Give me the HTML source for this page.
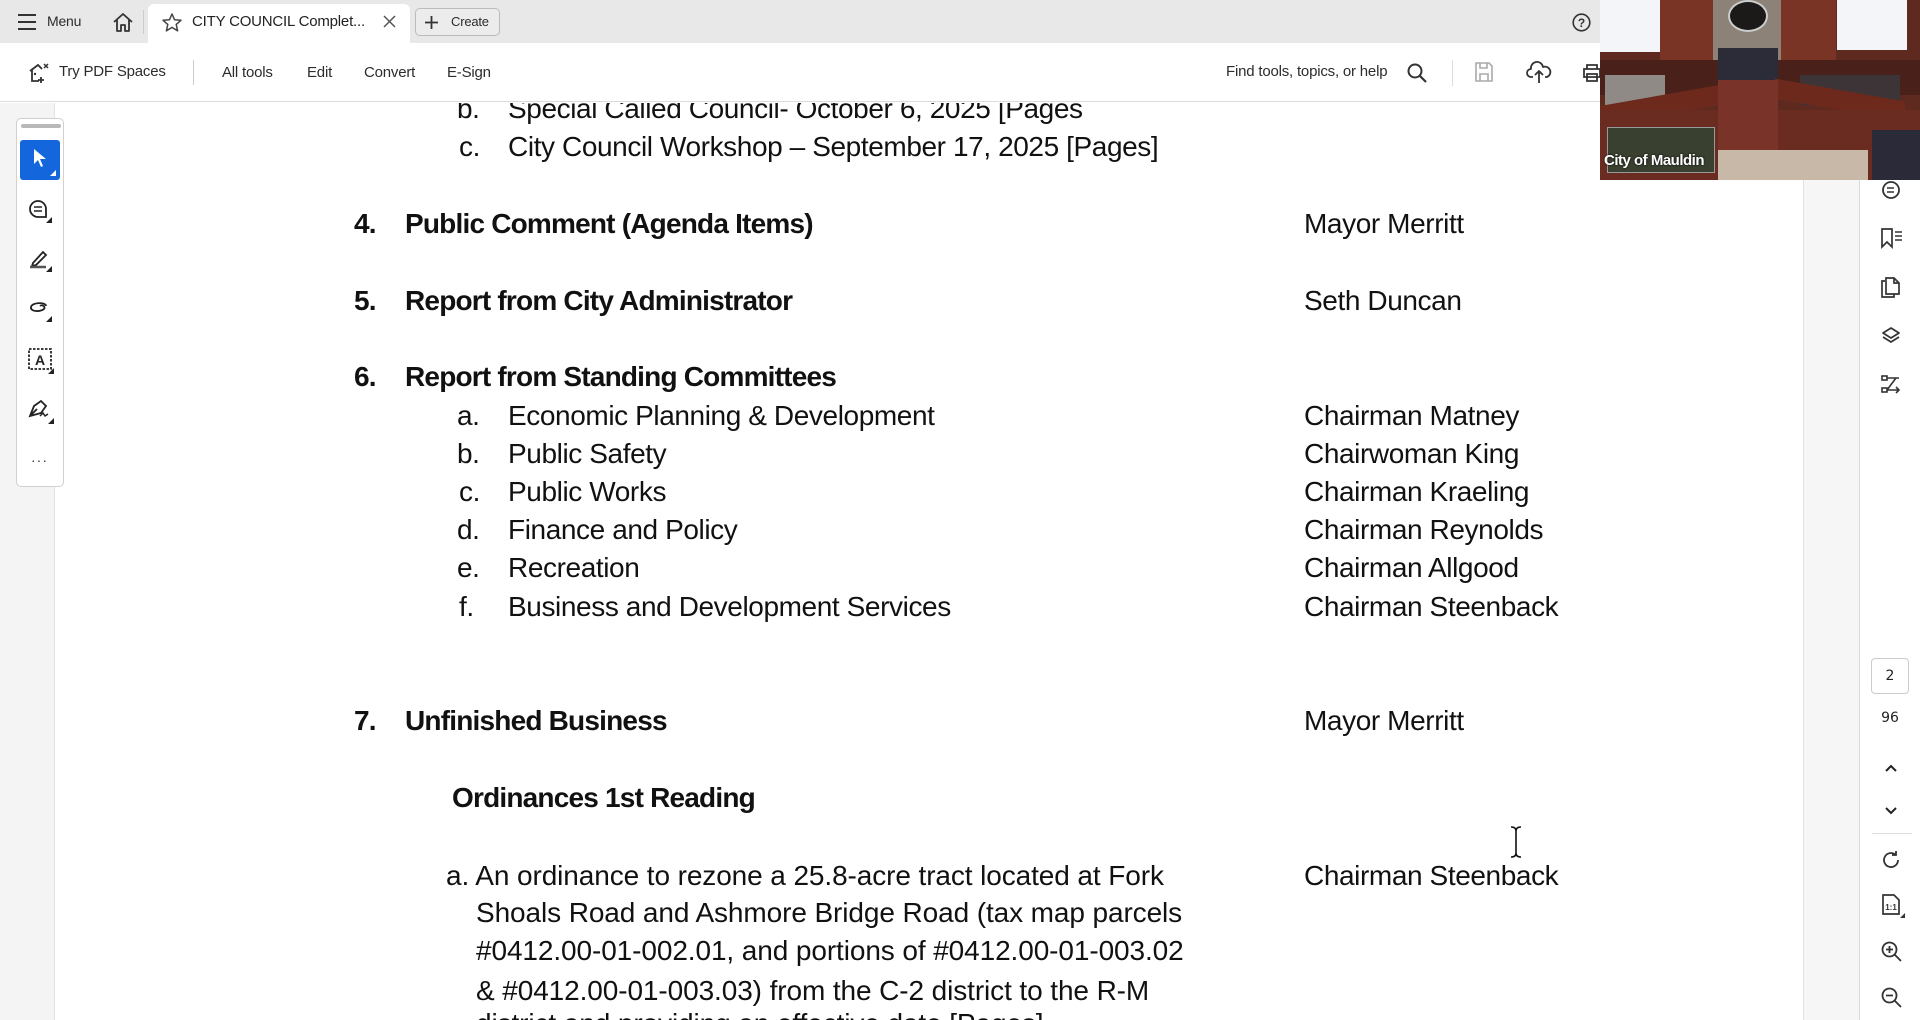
<!DOCTYPE html>
<html><head><meta charset="utf-8">
<style>
*{margin:0;padding:0;box-sizing:border-box}
html,body{width:1920px;height:1020px;overflow:hidden}
body{background:#fff;font-family:"Liberation Sans",sans-serif;position:relative;color:#222}
.abs{position:absolute}
#tabbar{left:0;top:0;width:1920px;height:43px;background:#e8e8e8}
#toolbar{left:0;top:43px;width:1920px;height:59px;background:#fff;border-bottom:1px solid #dcdcdc}
.tb{position:absolute;font-size:15px;color:#2c2c2c;white-space:nowrap;letter-spacing:-.2px}
#leftbg{left:0;top:103px;width:55px;height:917px;background:#f4f4f4;border-right:1px solid #e2e2e2}
#rightbg{left:1803px;top:103px;width:57px;height:917px;background:#f6f6f6;border-left:1px solid #e2e2e2;border-right:1px solid #dcdcdc}
#rail{left:1860px;top:103px;width:60px;height:917px;background:#fff}
#pill{left:16px;top:118px;width:48px;height:369px;background:#fff;border:1px solid #d0d0d0;border-radius:5px}
#doc{left:56px;top:103px;width:1747px;height:917px;overflow:hidden}
.t{position:absolute;white-space:nowrap;font-size:28px;line-height:38px;letter-spacing:-.4px;color:#111}
.b{font-weight:bold;letter-spacing:-.8px}
.o{letter-spacing:-.1px}
svg{position:absolute;overflow:visible}
</style></head><body>

<div id="tabbar" class="abs"></div>
<svg style="left:18px;top:14px" width="18" height="16"><path d="M0 1H18M0 8H18M0 15H18" stroke="#333" stroke-width="2"/></svg>
<div class="tb" style="left:47px;top:13px;font-size:14px">Menu</div>
<svg style="left:112px;top:11px" width="22" height="22" viewBox="0 0 22 22"><path d="M2 11L11 3L20 11M5 9V20H9V14H13V20H17V9" fill="none" stroke="#333" stroke-width="1.8" stroke-linejoin="round"/></svg>
<div class="abs" style="left:143px;top:10px;width:1px;height:24px;background:#ccc"></div>
<div class="abs" style="left:148px;top:4px;width:262px;height:39px;background:#fff;border-radius:6px 6px 0 0"></div>
<svg style="left:162px;top:13px" width="20" height="19" viewBox="0 0 20 19"><path d="M10 1L12.6 6.8L19 7.3L14.2 11.4L15.6 17.8L10 14.4L4.4 17.8L5.8 11.4L1 7.3L7.4 6.8Z" fill="none" stroke="#444" stroke-width="1.5" stroke-linejoin="round"/></svg>
<div class="tb" style="left:192px;top:13px;font-size:15px;color:#222">CITY COUNCIL Complet...</div>
<svg style="left:384px;top:16px" width="11" height="11"><path d="M0 0L11 11M11 0L0 11" stroke="#555" stroke-width="1.5"/></svg>
<div class="abs" style="left:415px;top:8px;width:85px;height:28px;border:1px solid #bbb;border-radius:5px;background:#ececec"></div>
<svg style="left:425px;top:16px" width="13" height="13"><path d="M6.5 0V13M0 6.5H13" stroke="#333" stroke-width="1.8"/></svg>
<div class="tb" style="left:451px;top:14px;font-size:13px">Create</div>
<svg style="left:1572px;top:13px" width="19" height="19" viewBox="0 0 19 19"><circle cx="9.5" cy="9.5" r="8.3" fill="none" stroke="#333" stroke-width="1.6"/><text x="9.5" y="14" font-size="12" font-weight="bold" text-anchor="middle" font-family="Liberation Sans" fill="#333">?</text></svg>

<div id="toolbar" class="abs"></div>
<svg style="left:27px;top:61px" width="24" height="24" viewBox="0 0 24 24"><path d="M3 10L11 4L15 8M5 9V20H12M14 16V22M11 19H17" fill="none" stroke="#333" stroke-width="1.8"/><path d="M17 3L21 7M21 3L17 7" stroke="#333" stroke-width="1.5"/><circle cx="8" cy="13" r="1.2" fill="#333"/></svg>
<div class="tb" style="left:59px;top:63px">Try PDF Spaces</div>
<div class="abs" style="left:193px;top:60px;width:1px;height:25px;background:#ccc"></div>
<div class="tb" style="left:222px;top:64px">All tools</div>
<div class="tb" style="left:307px;top:64px">Edit</div>
<div class="tb" style="left:364px;top:64px">Convert</div>
<div class="tb" style="left:447px;top:64px">E-Sign</div>
<div class="tb" style="left:1226px;top:63px">Find tools, topics, or help</div>
<svg style="left:1406px;top:62px" width="22" height="22" viewBox="0 0 22 22"><circle cx="9" cy="9" r="6.5" fill="none" stroke="#333" stroke-width="2"/><path d="M14 14L20 20" stroke="#333" stroke-width="2.2"/></svg>
<div class="abs" style="left:1452px;top:60px;width:1px;height:26px;background:#ddd"></div>
<svg style="left:1474px;top:61px" width="20" height="22" viewBox="0 0 20 22"><path d="M2 2H15L18 5V20H2Z M6 2V7H13V2 M6 20V13H14V20" fill="none" stroke="#aaa" stroke-width="1.6"/></svg>
<svg style="left:1526px;top:60px" width="26" height="24" viewBox="0 0 26 24"><path d="M7 17H5A4 4 0 0 1 5 9A6 6 0 0 1 17 7A5 5 0 0 1 21 17H19M13 11V23M9 15L13 11L17 15" fill="none" stroke="#333" stroke-width="1.8" stroke-linejoin="round"/></svg>
<svg style="left:1582px;top:63px" width="20" height="20" viewBox="0 0 20 20"><path d="M5 6V2H15V6M2 6H18V14H2Z M5 11H15V18H5Z" fill="none" stroke="#333" stroke-width="1.8"/></svg>

<div id="leftbg" class="abs"></div>
<div id="pill" class="abs"></div>
<div class="abs" style="left:21px;top:124px;width:40px;height:4px;background:#b8b8b8;border-radius:2px"></div>
<div class="abs" style="left:20px;top:140px;width:40px;height:40px;background:#1366dc;border-radius:3px"></div>
<svg style="left:33px;top:148px" width="14" height="20" viewBox="0 0 14 20"><path d="M1 1V16L5 12L8 19L10 18L7 11H13Z" fill="#fff"/></svg>
<svg style="left:50px;top:170px" width="6" height="6"><path d="M6 0V6H0Z" fill="#fff"/></svg>
<svg style="left:28px;top:199px" width="24" height="24" viewBox="0 0 24 24"><path d="M10 2A8 8 0 1 0 10 18H18V10A8 8 0 0 0 10 2Z" fill="none" stroke="#222" stroke-width="1.8"/><path d="M6 8H14M6 12H14" stroke="#222" stroke-width="1.6"/><path d="M24 18V24H18Z" fill="#222"/></svg>
<svg style="left:28px;top:248px" width="24" height="24" viewBox="0 0 24 24"><path d="M5 15L15 4L18 7L8 17L4 18Z" fill="none" stroke="#222" stroke-width="1.8"/><path d="M2 19H18" stroke="#555" stroke-width="2.5"/><path d="M24 18V24H18Z" fill="#222"/></svg>
<svg style="left:28px;top:298px" width="24" height="24" viewBox="0 0 24 24"><path d="M18 8C18 4 4 4 3 9C2 14 12 14 16 11C18 9 14 6 12 8" fill="none" stroke="#222" stroke-width="1.8"/><path d="M24 18V24H18Z" fill="#222"/></svg>
<svg style="left:28px;top:348px" width="24" height="24" viewBox="0 0 24 24"><rect x="1" y="1" width="22" height="20" fill="none" stroke="#222" stroke-width="1.8" stroke-dasharray="2.5 1.5"/><text x="12" y="17" font-size="14" font-weight="bold" text-anchor="middle" font-family="Liberation Sans" fill="#222">A</text><path d="M26 20V26H20Z" fill="#222"/></svg>
<svg style="left:28px;top:398px" width="24" height="24" viewBox="0 0 24 24"><path d="M2 18L6 8L13 3L18 8L13 15Z M2 18L9 11" fill="none" stroke="#222" stroke-width="1.8"/><path d="M12 18L15 15L17 18L20 16" fill="none" stroke="#222" stroke-width="1.5"/><path d="M26 20V26H20Z" fill="#222"/></svg>
<div class="abs" style="left:31px;top:452px;font-size:14px;color:#333;letter-spacing:1px">···</div>

<div id="doc" class="abs">
 <div style="position:absolute;left:-56px;top:-103px;width:1920px;height:1020px">
  <div class="t" style="left:457px;top:90px">b.</div><div class="t" style="left:508px;top:90px">Special Called Council- October 6, 2025 [Pages</div>
  <div class="t" style="left:459px;top:128px">c.</div><div class="t" style="left:508px;top:128px">City Council Workshop – September 17, 2025 [Pages]</div>

  <div class="t b" style="left:354px;top:205px">4.</div><div class="t b" style="left:405px;top:205px">Public Comment (Agenda Items)</div><div class="t" style="left:1304px;top:205px">Mayor Merritt</div>
  <div class="t b" style="left:354px;top:282px">5.</div><div class="t b" style="left:405px;top:282px">Report from City Administrator</div><div class="t" style="left:1304px;top:282px">Seth Duncan</div>
  <div class="t b" style="left:354px;top:358px">6.</div><div class="t b" style="left:405px;top:358px">Report from Standing Committees</div>

  <div class="t" style="left:457px;top:397px">a.</div><div class="t" style="left:508px;top:397px">Economic Planning &amp; Development</div><div class="t" style="left:1304px;top:397px">Chairman Matney</div>
  <div class="t" style="left:457px;top:435px">b.</div><div class="t" style="left:508px;top:435px">Public Safety</div><div class="t" style="left:1304px;top:435px">Chairwoman King</div>
  <div class="t" style="left:459px;top:473px">c.</div><div class="t" style="left:508px;top:473px">Public Works</div><div class="t" style="left:1304px;top:473px">Chairman Kraeling</div>
  <div class="t" style="left:457px;top:511px">d.</div><div class="t" style="left:508px;top:511px">Finance and Policy</div><div class="t" style="left:1304px;top:511px">Chairman Reynolds</div>
  <div class="t" style="left:457px;top:549px">e.</div><div class="t" style="left:508px;top:549px">Recreation</div><div class="t" style="left:1304px;top:549px">Chairman Allgood</div>
  <div class="t" style="left:459px;top:588px">f.</div><div class="t" style="left:508px;top:588px">Business and Development Services</div><div class="t" style="left:1304px;top:588px">Chairman Steenback</div>

  <div class="t b" style="left:354px;top:702px">7.</div><div class="t b" style="left:405px;top:702px">Unfinished Business</div><div class="t" style="left:1304px;top:702px">Mayor Merritt</div>
  <div class="t b" style="left:452px;top:779px">Ordinances 1st Reading</div>

  <div class="t o" style="left:446px;top:857px">a. An ordinance to rezone a 25.8-acre tract located at Fork</div><div class="t" style="left:1304px;top:857px">Chairman Steenback</div>
  <div class="t o" style="left:476px;top:894px">Shoals Road and Ashmore Bridge Road (tax map parcels</div>
  <div class="t o" style="left:476px;top:932px">#0412.00-01-002.01, and portions of #0412.00-01-003.02</div>
  <div class="t o" style="left:476px;top:972px">&amp; #0412.00-01-003.03) from the C-2 district to the R-M</div>
  <div class="t o" style="left:476px;top:1005px">district and providing an effective date [Pages]</div>
 </div>
</div>
<svg style="left:1510px;top:826px" width="12" height="32"><path d="M1 1Q6 1 6 5V27Q6 31 1 31M11 1Q6 1 6 5M6 27Q6 31 11 31" fill="none" stroke="#111" stroke-width="1.6"/></svg>

<div id="rightbg" class="abs"></div>
<div id="rail" class="abs"></div>
<svg style="left:1881px;top:180px" width="20" height="20" viewBox="0 0 20 20"><circle cx="10" cy="10" r="8" fill="none" stroke="#333" stroke-width="1.8"/><path d="M6 8H13M6 12H13" stroke="#333" stroke-width="1.6"/></svg>
<svg style="left:1881px;top:228px" width="22" height="20" viewBox="0 0 22 20"><path d="M1 1H11V19L6 14L1 19Z" fill="none" stroke="#333" stroke-width="1.7"/><path d="M14 4H21M14 8H21M14 12H21" stroke="#333" stroke-width="1.5"/></svg>
<svg style="left:1881px;top:277px" width="20" height="21" viewBox="0 0 20 21"><path d="M4 4H1V20H13V17 M5 1H13L18 6V17H5Z M13 1V6H18" fill="none" stroke="#333" stroke-width="1.7"/></svg>
<svg style="left:1881px;top:326px" width="20" height="20" viewBox="0 0 20 20"><path d="M10 2L18 7L10 12L2 7Z M2 11L10 16L18 11" fill="none" stroke="#333" stroke-width="1.7" stroke-linejoin="round"/></svg>
<svg style="left:1881px;top:374px" width="20" height="20" viewBox="0 0 20 20"><rect x="1" y="2" width="5" height="4" fill="none" stroke="#333" stroke-width="1.6"/><rect x="1" y="14" width="5" height="4" fill="none" stroke="#333" stroke-width="1.6"/><path d="M6 4H18M15 4L6 16M6 16H18M15 13L18 16L15 19" fill="none" stroke="#333" stroke-width="1.6"/></svg>
<div class="abs" style="left:1871px;top:658px;width:38px;height:36px;border:1px solid #ccc;border-radius:4px;text-align:center;line-height:34px;font-size:14px;color:#222;font-family:'DejaVu Sans',sans-serif">2</div>
<div class="abs" style="left:1871px;top:710px;width:38px;text-align:center;font-size:14px;color:#222;font-family:'DejaVu Sans',sans-serif">96</div>
<svg style="left:1885px;top:764px" width="12" height="8"><path d="M1 7L6 2L11 7" fill="none" stroke="#222" stroke-width="2"/></svg>
<svg style="left:1885px;top:807px" width="12" height="8"><path d="M1 1L6 6L11 1" fill="none" stroke="#222" stroke-width="2"/></svg>
<div class="abs" style="left:1872px;top:833px;width:40px;height:1px;background:#ddd"></div>
<svg style="left:1881px;top:850px" width="20" height="20" viewBox="0 0 20 20"><path d="M17 10A7 7 0 1 1 14 4.3M15 1V5H11" fill="none" stroke="#333" stroke-width="1.8"/></svg>
<svg style="left:1881px;top:894px" width="24" height="24" viewBox="0 0 24 24"><path d="M2 1H13L18 6V20H2Z" fill="none" stroke="#333" stroke-width="1.7"/><text x="10" y="16" font-size="8" font-weight="bold" text-anchor="middle" font-family="Liberation Sans" fill="#333">1:1</text><path d="M24 19V24H19Z" fill="#333"/></svg>
<svg style="left:1881px;top:941px" width="21" height="21" viewBox="0 0 21 21"><circle cx="8.5" cy="8.5" r="7" fill="none" stroke="#333" stroke-width="1.8"/><path d="M13.5 13.5L20 20M5 8.5H12M8.5 5V12" stroke="#333" stroke-width="1.8"/></svg>
<svg style="left:1881px;top:987px" width="21" height="21" viewBox="0 0 21 21"><circle cx="8.5" cy="8.5" r="7" fill="none" stroke="#333" stroke-width="1.8"/><path d="M13.5 13.5L20 20M5 8.5H12" stroke="#333" stroke-width="1.8"/></svg>

<div class="abs" style="left:1600px;top:0;width:320px;height:180px;overflow:hidden;background:#5e2a20">
 <div class="abs" style="left:0;top:0;width:60px;height:52px;background:#f4f5f8"></div>
 <div class="abs" style="left:60px;top:0;width:55px;height:60px;background:#7a3426"></div>
 <div class="abs" style="left:113px;top:0;width:68px;height:80px;background:#8d8278"></div>
 <div class="abs" style="left:181px;top:0;width:55px;height:60px;background:#7a3426"></div>
 <div class="abs" style="left:237px;top:0;width:70px;height:50px;background:#f4f5f8"></div>
 <div class="abs" style="left:128px;top:0;width:40px;height:32px;border-radius:50%;background:#1c1a18;border:2px solid #ccc"></div>
 <div class="abs" style="left:0;top:60px;width:320px;height:35px;background:#4a201a"></div>
 <div class="abs" style="left:118px;top:48px;width:60px;height:34px;background:#2c2c38"></div>
 <div class="abs" style="left:5px;top:75px;width:60px;height:35px;background:#8f8a86"></div>
 <div class="abs" style="left:200px;top:75px;width:100px;height:30px;background:#3c3436"></div>
 <div class="abs" style="left:0;top:95px;width:125px;height:20px;background:#6d2a1c;transform:skewY(-10deg)"></div>
 <div class="abs" style="left:175px;top:90px;width:130px;height:20px;background:#6d2a1c;transform:skewY(10deg)"></div>
 <div class="abs" style="left:0;top:110px;width:320px;height:70px;background:#6a2c21"></div>
 <div class="abs" style="left:118px;top:80px;width:60px;height:70px;background:#7a3328"></div>
 <div class="abs" style="left:118px;top:150px;width:150px;height:30px;background:#c8b8a8"></div>
 <div class="abs" style="left:272px;top:130px;width:48px;height:50px;background:#2a2a38"></div>
 <div class="abs" style="left:7px;top:127px;width:108px;height:46px;background:#3a4030;border:1px solid #999"></div>
 <div class="abs" style="left:4px;top:152px;font-size:15px;color:#fff;font-weight:bold;letter-spacing:-.5px;text-shadow:0 0 2px #000">City of Mauldin</div>
</div>
</body></html>
